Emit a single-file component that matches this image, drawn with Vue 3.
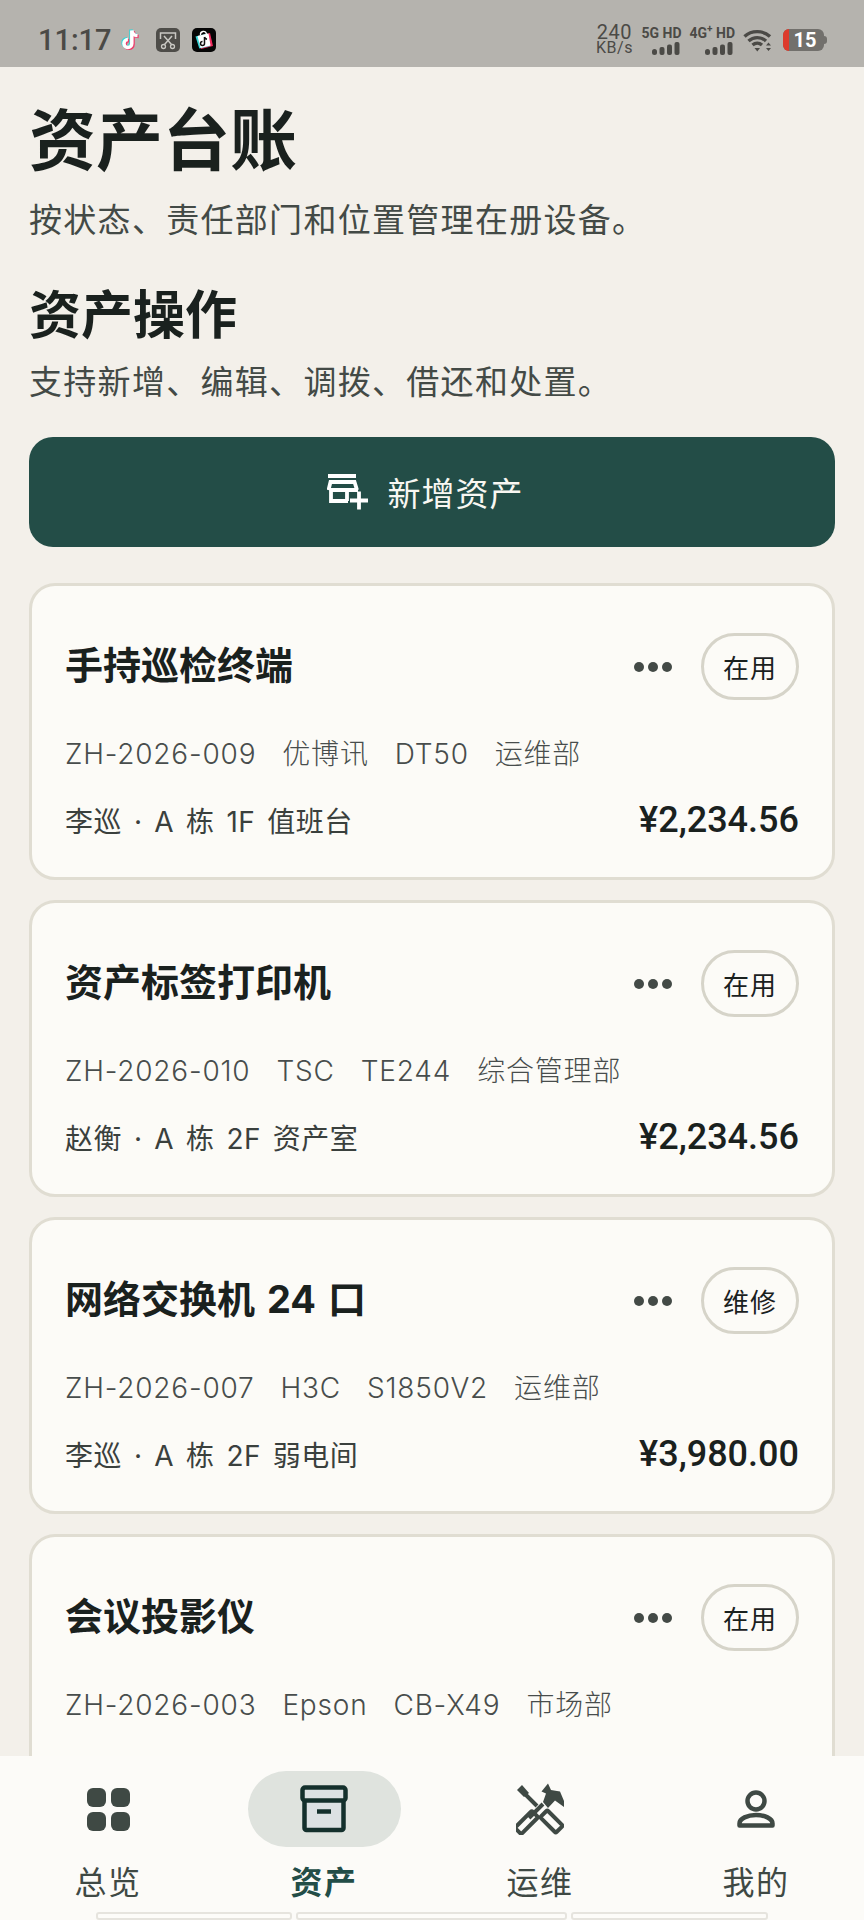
<template>
  <div class="phone">
    <!-- Status bar -->
    <div class="statusbar">
      <div class="status-left">
        <span class="time">11:17</span>
        <svg class="app-note" viewBox="0 0 24 26" width="21" height="24">
          <path d="M13.5 2v15a4.5 4.5 0 1 1-4.5-4.5M13.5 2c.4 3.6 2.6 5.8 6.5 6" fill="none" stroke="#35d5d8" stroke-width="4" transform="translate(-1 -1)" />
          <path d="M13.5 2v15a4.5 4.5 0 1 1-4.5-4.5M13.5 2c.4 3.6 2.6 5.8 6.5 6" fill="none" stroke="#ee3d6c" stroke-width="4" transform="translate(1.4 1)" />
          <path d="M13.5 2v15a4.5 4.5 0 1 1-4.5-4.5M13.5 2c.4 3.6 2.6 5.8 6.5 6" fill="none" stroke="#fff" stroke-width="4" />
        </svg>
        <svg class="app-cut" viewBox="0 0 24 24" width="24" height="24">
          <rect width="24" height="24" rx="5" fill="#4e4d49" />
          <path d="M4.500 11V5h15v6" fill="none" stroke="#c9c8c3" stroke-width="1.500" />
          <path d="M8 8l7.500 8.500M16 8l-7.500 8.500" fill="none" stroke="#c9c8c3" stroke-width="1.500" />
          <circle cx="7.500" cy="18.500" r="2" fill="none" stroke="#c9c8c3" stroke-width="1.300" />
          <circle cx="16.500" cy="18.500" r="2" fill="none" stroke="#c9c8c3" stroke-width="1.300" />
        </svg>
        <svg class="app-shop" viewBox="0 0 24 24" width="24" height="24">
          <rect width="24" height="24" rx="5" fill="#060606" />
          <path d="M6 8l12-3 3 13-12 3z" fill="#ee2a5c" />
          <path d="M3.500 8.500l12-3 2.800 12.500-11 2.500z" fill="#37d6d8" />
          <path d="M5.500 8l11-2.500 2 12-10 2.500z" fill="#fff" />
          <path d="M8.500 7c-.5-4 5-5 6-1" fill="none" stroke="#fff" stroke-width="1.300" />
          <path d="M12.500 9v6.500a2 2 0 1 1-2-2M12.500 9c.3 1.300 1.200 2 2.500 2.200" fill="none" stroke="#111" stroke-width="1.500" />
        </svg>
      </div>
      <div class="status-right">
        <div class="speed"><span>240</span><span class="speed-unit">KB/s</span></div>
        <div class="signal">
          <span>5G HD</span>
          <svg viewBox="0 0 28 13" width="28" height="13">
            <rect x="0" y="7" width="5" height="6" rx="2.500" /><rect x="7.500" y="5" width="5" height="8" rx="2" />
            <rect x="15" y="2.500" width="5" height="10.500" rx="2" /><rect x="22.500" y="0" width="5" height="13" rx="2" />
          </svg>
        </div>
        <div class="signal">
          <span>4G<sup>+</sup> HD</span>
          <svg viewBox="0 0 28 13" width="28" height="13">
            <rect x="0" y="7" width="5" height="6" rx="2.500" /><rect x="7.500" y="5" width="5" height="8" rx="2" />
            <rect x="15" y="2.500" width="5" height="10.500" rx="2" /><rect x="22.500" y="0" width="5" height="13" rx="2" />
          </svg>
        </div>
        <svg class="wifi" viewBox="0 0 30 24" width="30" height="24">
          <path d="M1.500 8.500C8.500 2 20 2 27 8.500M5.500 13c5-4.500 12.500-4.500 17.500 0M9.500 17c2.800-2.300 6.700-2.300 9.500 0" fill="none" stroke="#4b4a46" stroke-width="3.400" />
          <path d="M11.500 20h5.500l-2.700 3.500z" fill="#4b4a46" />
          <path d="M25.500 14.500l2.500 3h-5zM25.500 23l-2.500-3h5z" fill="#4b4a46" />
        </svg>
        <div class="battery">
          <span class="battery-low"></span>
          <span class="battery-num">15</span>
          <span class="battery-cap"></span>
        </div>
      </div>
    </div>

    <!-- Page content -->
    <main class="content">
      <h1>资产台账</h1>
      <p class="lead">按状态、责任部门和位置管理在册设备。</p>
      <h2>资产操作</h2>
      <p class="lead lead-small">支持新增、编辑、调拨、借还和处置。</p>

      <button class="add-btn" type="button">
        <svg viewBox="0 0 41 36" width="41" height="36" fill="none" stroke="#fff" stroke-width="3.800">
          <path d="M1 2h28M2.500 16h28.500M1.500 16L3.500 8h24l2.500 8M4 16v11h17M20 16v11" />
          <path d="M32 17.500v18M23 26.500h18" />
        </svg>
        <span>新增资产</span>
      </button>

      <div class="list">
        <article v-for="item in assets" :key="item.code" class="card">
          <div class="card-head">
            <h3>{{ item.name }}</h3>
            <div class="more"><i></i><i></i><i></i></div>
            <span class="pill">{{ item.status }}</span>
          </div>
          <div class="meta">
            <span>{{ item.code }}</span>
            <span>{{ item.brand }}</span>
            <span>{{ item.model }}</span>
            <span>{{ item.dept }}</span>
          </div>
          <div v-if="item.owner" class="card-foot">
            <span class="owner">{{ item.owner }}</span>
            <span class="price">{{ item.price }}</span>
          </div>
        </article>
      </div>
    </main>

    <!-- Bottom tabs -->
    <nav class="tabs">
      <div class="tab">
        <div class="tab-icon">
          <svg viewBox="0 0 43 43" width="43" height="43" fill="#3f4944">
            <rect width="19" height="19" rx="6" /><rect x="24" width="19" height="19" rx="6" />
            <rect y="24" width="19" height="19" rx="6" /><rect x="24" y="24" width="19" height="19" rx="6" />
          </svg>
        </div>
        <span>总览</span>
      </div>
      <div class="tab active">
        <div class="tab-icon">
          <svg viewBox="0 0 48 48" width="48" height="48" fill="#dce1e3" stroke="#14302c" stroke-width="4.500" stroke-linejoin="round">
            <path d="M4.500 14h39v29a2 2 0 0 1-2 2h-35a2 2 0 0 1-2-2z" />
            <rect x="2.500" y="2.500" width="43" height="13" rx="2.500" />
            <path d="M17 26.500h14" />
          </svg>
        </div>
        <span>资产</span>
      </div>
      <div class="tab">
        <div class="tab-icon">
          <svg viewBox="0 0 48 52" width="48" height="52" fill="none" stroke="#3f4944">
            <path d="M1 7l5-5 7 8-5 4z" fill="#3f4944" stroke="none" />
            <path d="M9 11l12 12M27 21L13 35" stroke-width="4" />
            <g stroke-width="4">
              <rect x="-11" y="-5" width="22" height="10" rx="1.500" transform="translate(35.500 38.500) rotate(45)" />
              <rect x="-12" y="-4.500" width="24" height="9" rx="1.500" transform="translate(10.500 39.500) rotate(-45)" />
            </g>
            <path d="M25.500 8.500L32 .5l3 6.500 9 1.500 4 9.500v6l-9-6.500-7 7.500-5-6 3-8.500z" fill="#3f4944" stroke="none" />
          </svg>
        </div>
        <span>运维</span>
      </div>
      <div class="tab">
        <div class="tab-icon">
          <svg viewBox="0 0 38 38" width="38" height="38" fill="none" stroke="#3f4944" stroke-width="4.500" stroke-linejoin="round">
            <circle cx="19" cy="11" r="8.500" />
            <path d="M2.500 35.500v-2c0-5 8-8.500 16.500-8.500s16.500 3.500 16.500 8.500v2z" />
          </svg>
        </div>
        <span>我的</span>
      </div>
      <div class="peek">
        <i class="peek-a"></i><i class="peek-b"></i><i class="peek-c"></i>
      </div>
    </nav>
  </div>
</template>

<script setup>
const assets = [
  { name: '手持巡检终端', status: '在用', code: 'ZH-2026-009', brand: '优博讯', model: 'DT50', dept: '运维部', owner: '李巡 · A 栋 1F 值班台', price: '¥2,234.56' },
  { name: '资产标签打印机', status: '在用', code: 'ZH-2026-010', brand: 'TSC', model: 'TE244', dept: '综合管理部', owner: '赵衡 · A 栋 2F 资产室', price: '¥2,234.56' },
  { name: '网络交换机 24 口', status: '维修', code: 'ZH-2026-007', brand: 'H3C', model: 'S1850V2', dept: '运维部', owner: '李巡 · A 栋 2F 弱电间', price: '¥3,980.00' },
  { name: '会议投影仪', status: '在用', code: 'ZH-2026-003', brand: 'Epson', model: 'CB-X49', dept: '市场部' }
]
</script>

<style scoped>
.phone {
  width: 864px;
  height: 1920px;
  display: flex;
  flex-direction: column;
  overflow: hidden;
  background: #f3f0ea;
  font-family: "Noto Sans CJK SC", "Noto Sans", sans-serif;
  color: #1c2320;
}

/* status bar */
.statusbar {
  height: 67px;
  flex: none;
  display: flex;
  justify-content: space-between;
  align-items: center;
  padding: 13px 37px 0 38px;
  box-sizing: border-box;
  background: #b5b3ae;
  color: #4b4a46;
}
.status-left {
  display: flex;
  align-items: center;
}
.time {
  font-family: Roboto, sans-serif;
  font-size: 29px;
  font-weight: 500;
  line-height: 34px;
  width: 82px;
}
.app-note {
  margin-right: 15px;
}
.app-cut {
  margin-right: 12px;
}
.status-right {
  display: flex;
  align-items: center;
}
.speed {
  display: flex;
  flex-direction: column;
  align-items: center;
  font-family: Roboto, sans-serif;
  font-size: 20px;
  line-height: 16px;
  letter-spacing: 0.5px;
  width: 36px;
  margin-right: 9px;
}
.speed-unit {
  font-size: 16px;
  letter-spacing: 0.5px;
}
.signal {
  display: flex;
  flex-direction: column;
  align-items: flex-end;
  gap: 2px;
  font-family: Roboto, sans-serif;
  font-size: 14px;
  font-weight: 700;
  line-height: 14px;
  margin-right: 8px;
  white-space: nowrap;
}
.signal svg {
  fill: #4b4a46;
  margin-right: 2px;
}
.signal sup {
  font-size: 10px;
  line-height: 0;
}
.wifi {
  margin-right: 10px;
}
.battery {
  position: relative;
  width: 41px;
  height: 22px;
  margin-right: 3px;
  border-radius: 6px;
  background: #72706c;
  overflow: visible;
  display: flex;
  justify-content: center;
  align-items: center;
}
.battery-low {
  position: absolute;
  left: 0;
  top: 0;
  width: 6px;
  height: 22px;
  border-radius: 6px 0 0 6px;
  background: #dd3a2c;
}
.battery-num {
  font-family: Roboto, sans-serif;
  font-size: 20px;
  font-weight: 700;
  color: #fff;
  margin-left: 3px;
}
.battery-cap {
  position: absolute;
  right: -3px;
  top: 7px;
  width: 3px;
  height: 8px;
  border-radius: 0 3px 3px 0;
  background: #72706c;
}

/* content */
.content {
  flex: 1;
  min-height: 0;
  overflow: hidden;
  padding: 0 29px;
}
h1 {
  margin: 32px 0 0;
  font-size: 67px;
  font-weight: 700;
  line-height: 74px;
  color: #1a211e;
}
.lead {
  margin: 23px 0 0;
  font-size: 33px;
  line-height: 44px;
  letter-spacing: 1.3px;
  color: #434a46;
}
h2 {
  margin: 41px 0 0;
  font-size: 52px;
  font-weight: 700;
  line-height: 62px;
  color: #1a211e;
}
.lead-small {
  margin-top: 15px;
}
.add-btn {
  width: 806px;
  height: 110px;
  margin-top: 35px;
  padding: 0 14px 0 0;
  display: flex;
  justify-content: center;
  align-items: center;
  gap: 20px;
  border: none;
  border-radius: 24px;
  background: #234d47;
  color: #f8f7f2;
  font-family: inherit;
  font-size: 33px;
  letter-spacing: 1px;
}
.list {
  display: flex;
  flex-direction: column;
  gap: 20px;
  margin-top: 36px;
}
.card {
  box-sizing: border-box;
  width: 806px;
  min-height: 297px;
  padding: 47px 33px 0 33px;
  border: 3px solid #e0ddd2;
  border-radius: 26px;
  background: #fcfbf7;
}
.card-head {
  display: flex;
  align-items: center;
  height: 67px;
}
h3 {
  flex: 1;
  margin: 0;
  padding-bottom: 3px;
  font-family: Inter, "Noto Sans CJK SC", sans-serif;
  font-size: 38px;
  font-weight: 700;
  line-height: 50px;
  word-spacing: 3px;
  color: #1a211e;
}
.more {
  display: flex;
  gap: 4px;
  margin-right: 29px;
}
.more i {
  width: 10px;
  height: 10px;
  border-radius: 50%;
  background: #434a46;
}
.pill {
  box-sizing: border-box;
  width: 98px;
  height: 67px;
  display: flex;
  justify-content: center;
  align-items: center;
  border: 3px solid #d6d4c9;
  border-radius: 34px;
  font-size: 26px;
  letter-spacing: 1px;
  color: #1a211e;
}
.meta {
  display: flex;
  gap: 26px;
  margin-top: 34px;
  font-family: Inter, "Noto Sans CJK SC", sans-serif;
  font-size: 28px;
  font-weight: 300;
  line-height: 40px;
  letter-spacing: 0.8px;
  color: #484d4c;
}
.card-foot {
  display: flex;
  justify-content: space-between;
  align-items: center;
  margin-top: 23px;
  height: 46px;
}
.owner {
  font-family: Inter, "Noto Sans CJK SC", sans-serif;
  font-size: 28px;
  letter-spacing: 0.5px;
  word-spacing: 3.5px;
  color: #3a403d;
}
.price {
  font-family: Roboto, "Noto Sans CJK SC", sans-serif;
  font-size: 36px;
  font-weight: 500;
  color: #1a211e;
}

/* tabs */
.tabs {
  position: relative;
  height: 164px;
  flex: none;
  box-sizing: border-box;
  display: grid;
  grid-template-columns: repeat(4, 216px);
  background: #fcfbf8;
}
.tab {
  display: flex;
  flex-direction: column;
  align-items: center;
  font-size: 32px;
  line-height: 44px;
  letter-spacing: 1.500px;
  color: #3f4944;
}
.tab-icon {
  width: 153px;
  height: 76px;
  margin-top: 15px;
  margin-bottom: 11px;
  display: flex;
  justify-content: center;
  align-items: center;
  border-radius: 38px;
}
.active .tab-icon {
  background: #dfe3de;
}
.active {
  color: #234d47;
  font-weight: 700;
}
.peek {
  position: absolute;
  left: 96px;
  top: 156px;
  display: flex;
  gap: 4px;
}
.peek i {
  box-sizing: border-box;
  height: 8px;
  border: 2px solid #e6e4de;
  border-radius: 3px;
  background: #fdfcf9;
}
.peek-a {
  width: 196px;
}
.peek-b {
  width: 271px;
}
.peek-c {
  width: 197px;
}
</style>

<style>
html,
body {
  margin: 0;
  background: #f3f0ea;
}
</style>
